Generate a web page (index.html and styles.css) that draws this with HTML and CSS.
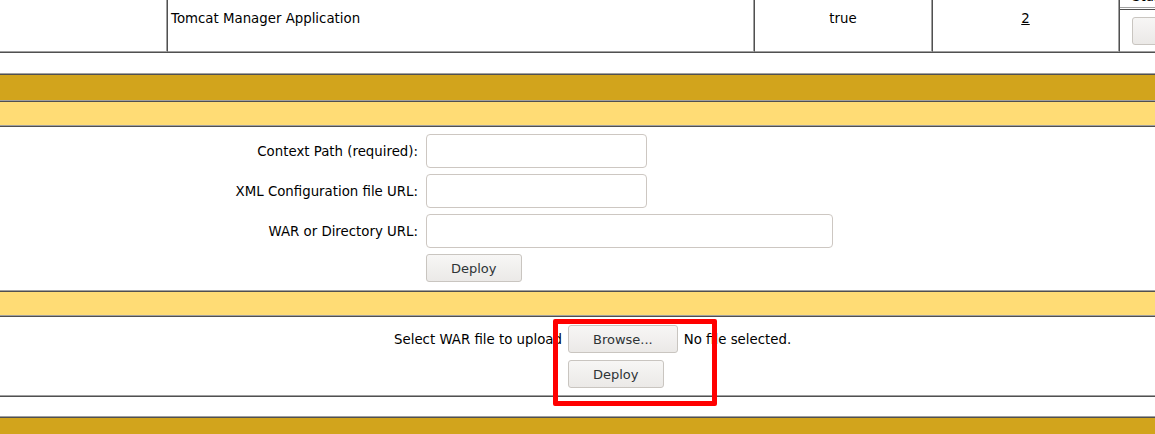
FILE: index.html
```html
<!DOCTYPE html>
<html lang="en">
<head>
    <title>Tomcat Web Application Manager</title>
    <link rel="stylesheet" href="styles.css">
</head>
<body>
    <div class="app-table">
        <div class="app-row">
            <div class="cell cell-version"></div>
            <div class="cell cell-name">Tomcat Manager Application</div>
            <div class="cell cell-running">true</div>
            <div class="cell cell-sessions"><a href="#">2</a></div>
            <div class="cell cell-commands">
                <div class="commands-top"><span>Start Stop Reload</span></div>
                <div class="commands-bottom">
                    <button type="button" class="btn">Expire sessions</button>
                </div>
            </div>
        </div>
    </div>

    <div class="table-gap"></div>

    <div class="deploy-table">
        <div class="band title"></div>
        <div class="band header"></div>

        <div class="section">
            <form class="server-form">
                <label for="deployPath">Context Path (required):</label>
                <input type="text" id="deployPath" name="deployPath" class="input-short">

                <label for="deployConfig">XML Configuration file URL:</label>
                <input type="text" id="deployConfig" name="deployConfig" class="input-short">

                <label for="deployWar">WAR or Directory URL:</label>
                <input type="text" id="deployWar" name="deployWar" class="input-long">

                <span></span>
                <div><button type="submit" class="btn">Deploy</button></div>
            </form>
        </div>

        <div class="band header"></div>

        <div class="section upload">
            <form class="upload-form">
                <label>Select WAR file to upload</label>
                <div class="file-input">
                    <button type="button" class="btn">Browse...</button>
                    <span>No file selected.</span>
                </div>

                <span></span>
                <div><button type="submit" class="btn">Deploy</button></div>
            </form>
            <div class="highlight"></div>
        </div>
    </div>

    <div class="table-gap short"></div>

    <div class="deploy-table">
        <div class="band title"></div>
    </div>
</body>
</html>
```

FILE: styles.css
```css
body {
    margin: 0;
    width: 1155px;
    height: 434px;
    overflow: hidden;
    background-color: #fff;
    color: #000;
    font-family: "DejaVu Sans", sans-serif;
    font-size: 13.333px;
}

/* application list row */
.app-table {
    border-bottom: 1px solid #505050;
}

.app-row {
    display: flex;
}

.cell {
    box-sizing: border-box;
    height: 52px;
    padding: 11px 3px 0;
    border-left: 1px solid #505050;
    border-right: 1px solid #a0a0a0;
    border-bottom: 1px solid #a0a0a0;
}

.cell-version {
    width: 167px;
    border-left: none;
}

.cell-name {
    width: 587px;
}

.cell-running {
    width: 178px;
    text-align: center;
}

.cell-sessions {
    width: 187px;
    text-align: center;
}

.cell-sessions a {
    color: #000;
}

.cell-commands {
    flex: 1;
    padding: 0;
    border-right: none;
    overflow: hidden;
}

.commands-top {
    height: 7px;
    border-bottom: 1px solid #a0a0a0;
    overflow: hidden;
    padding-left: 12px;
    white-space: nowrap;
}

.commands-top span {
    display: block;
    margin-top: -10px;
    line-height: 13px;
}

.commands-bottom {
    margin-top: 1px;
    border-top: 1px solid #505050;
    padding: 7px 0 0 12px;
    white-space: nowrap;
}

.table-gap {
    height: 20px;
}

.table-gap.short {
    height: 19px;
}

/* deploy tables */
.deploy-table {
    border-top: 1px solid #a0a0a0;
    border-bottom: 1px solid #505050;
}

.band,
.section {
    border-top: 1px solid #505050;
    border-bottom: 1px solid #a0a0a0;
}

.title {
    height: 25px;
    background-color: #d2a41c;
}

.header {
    height: 23px;
    background-color: #ffdc75;
}

.section {
    position: relative;
}

.server-form {
    display: grid;
    grid-template-columns: 418px max-content;
    column-gap: 8px;
    row-gap: 6px;
    align-items: center;
    padding: 7px 0 8px;
}

.upload-form {
    display: grid;
    grid-template-columns: 562px max-content;
    column-gap: 6px;
    row-gap: 7px;
    align-items: center;
    padding: 8px 0 7px;
}

label {
    text-align: right;
    white-space: nowrap;
}

input[type="text"] {
    box-sizing: border-box;
    height: 34px;
    border: 1px solid #cdc7c2;
    border-radius: 4px;
    background-color: #fff;
    font-family: "DejaVu Sans", sans-serif;
    font-size: 13px;
    padding: 0 8px;
    margin: 0;
}

.input-short {
    width: 221px;
}

.input-long {
    width: 407px;
}

.btn {
    box-sizing: border-box;
    height: 28px;
    padding: 0 24px;
    margin: 0;
    border: 1px solid #c9c5c0;
    border-radius: 3px;
    background: linear-gradient(#f7f6f5, #ebe9e7);
    color: #2e3436;
    font-family: "DejaVu Sans", sans-serif;
    font-size: 13px;
    white-space: nowrap;
    cursor: pointer;
}

.file-input {
    display: flex;
    align-items: center;
    gap: 6px;
}

/* red annotation frame */
.highlight {
    position: absolute;
    left: 553px;
    top: 2px;
    width: 164px;
    height: 87px;
    box-sizing: border-box;
    border: 5px solid #f00;
    border-radius: 2px;
    z-index: 2;
}
```
